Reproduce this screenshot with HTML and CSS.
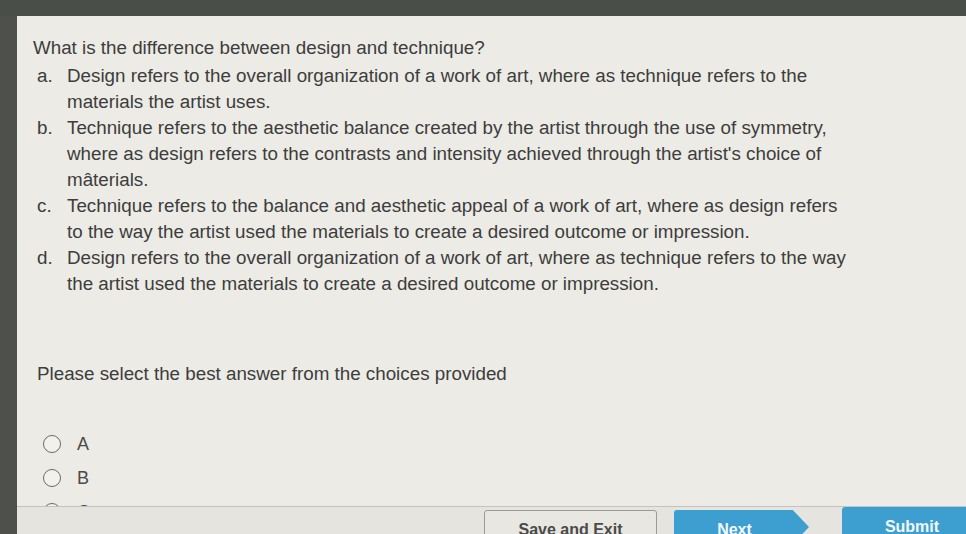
FILE: index.html
```html
<!DOCTYPE html>
<html lang="en">
<head>
  <meta charset="UTF-8" />
  <meta name="viewport" content="width=device-width, initial-scale=1" />
  <title>Question</title>
  <link rel="stylesheet" href="styles.css">
</head>
<body>
  <div class="top-bar"></div>
  <div class="frame">
    <div class="question-panel">
      <div class="question">What is the difference between design and technique?</div>
      <ol class="choices">
        <li><span class="letter">a.</span><span class="choice-text">Design refers to the overall organization of a work of art, where as technique refers to the materials the artist uses.</span></li>
        <li><span class="letter">b.</span><span class="choice-text">Technique refers to the aesthetic balance created by the artist through the use of symmetry, where as design refers to the contrasts and intensity achieved through the artist's choice of mâterials.</span></li>
        <li><span class="letter">c.</span><span class="choice-text">Technique refers to the balance and aesthetic appeal of a work of art, where as design refers to the way the artist used the materials to create a desired outcome or impression.</span></li>
        <li><span class="letter">d.</span><span class="choice-text">Design refers to the overall organization of a work of art, where as technique refers to the way the artist used the materials to create a desired outcome or impression.</span></li>
      </ol>

      <div class="prompt">Please select the best answer from the choices provided</div>

      <div class="answers">
        <label class="answer"><span class="radio"></span>A</label>
        <label class="answer"><span class="radio"></span>B</label>
        <label class="answer"><span class="radio"></span>C</label>
      </div>
    </div>

    <div class="footer">
      <button class="btn btn-save">Save and Exit</button>
      <button class="btn btn-next">Next</button>
      <button class="btn btn-submit">Submit</button>
    </div>
  </div>
</body>
</html>
```

FILE: styles.css
```css
html, body {
  margin: 0;
  padding: 0;
  height: 100vh;
  overflow: hidden;
  background-color: #4d504b;
  font-family: 'Liberation Sans', Arial, sans-serif;
}

.top-bar {
  height: 16px;
  background: #4a4e48;
}

.frame {
  margin-left: 17px;
  height: calc(100vh - 16px);
  display: flex;
  flex-direction: column;
  background: #ecebe5;
  overflow: hidden;
}

.question-panel {
  height: 490px;
  flex-shrink: 0;
  overflow: hidden;
  padding: 19px 0 0 16px;
  box-sizing: border-box;
  color: #3d3d3d;
  font-size: 18.8px;
  line-height: 26px;
}

.question {
  margin-bottom: 2px;
}

.choices {
  list-style: none;
  margin: 0;
  padding: 0 0 0 4px;
  width: 815px;
}

.choices li {
  display: flex;
}

.letter {
  width: 30px;
  flex-shrink: 0;
}

.prompt {
  margin: 64px 0 0 4px;
}

.answers {
  margin-top: 47px;
  padding-left: 10px;
  display: flex;
  flex-direction: column;
  gap: 14px;
}

.answer {
  display: flex;
  align-items: center;
  gap: 16px;
  font-size: 18px;
  line-height: 20px;
  color: #4a4a4a;
}

.radio {
  width: 16px;
  height: 16px;
  border: 1.5px solid #6a6a6a;
  border-radius: 50%;
  background: #f2f1ec;
}

.footer {
  flex: 1;
  border-top: 1px solid #c5c3bd;
  background: #e6e4de;
  display: flex;
  align-items: flex-start;
  padding: 2px 0 0 467px;
  gap: 17px;
}

.btn {
  font-family: 'Liberation Sans', Arial, sans-serif;
  font-size: 16px;
  font-weight: bold;
  height: 34px;
  padding: 6px 0 0;
  border-radius: 3px;
  flex-shrink: 0;
  text-align: center;
  vertical-align: top;
}

.btn-save {
  width: 173px;
  margin-top: 1px;
  background: #e9e7e1;
  border: 1px solid #9c9a96;
  color: #4a4a4a;
}

.btn-next {
  width: 135px;
  margin-top: 1px;
  border: none;
  background: #3d9fcf;
  color: #f4f8fb;
  padding-right: 14px;
  clip-path: polygon(0 0, 88% 0, 100% 50%, 88% 100%, 0 100%);
}

.btn-submit {
  width: 140px;
  margin-left: 16px;
  margin-top: -2px;
  border: none;
  background: #3d9fcf;
  color: #f4f8fb;
}
```
